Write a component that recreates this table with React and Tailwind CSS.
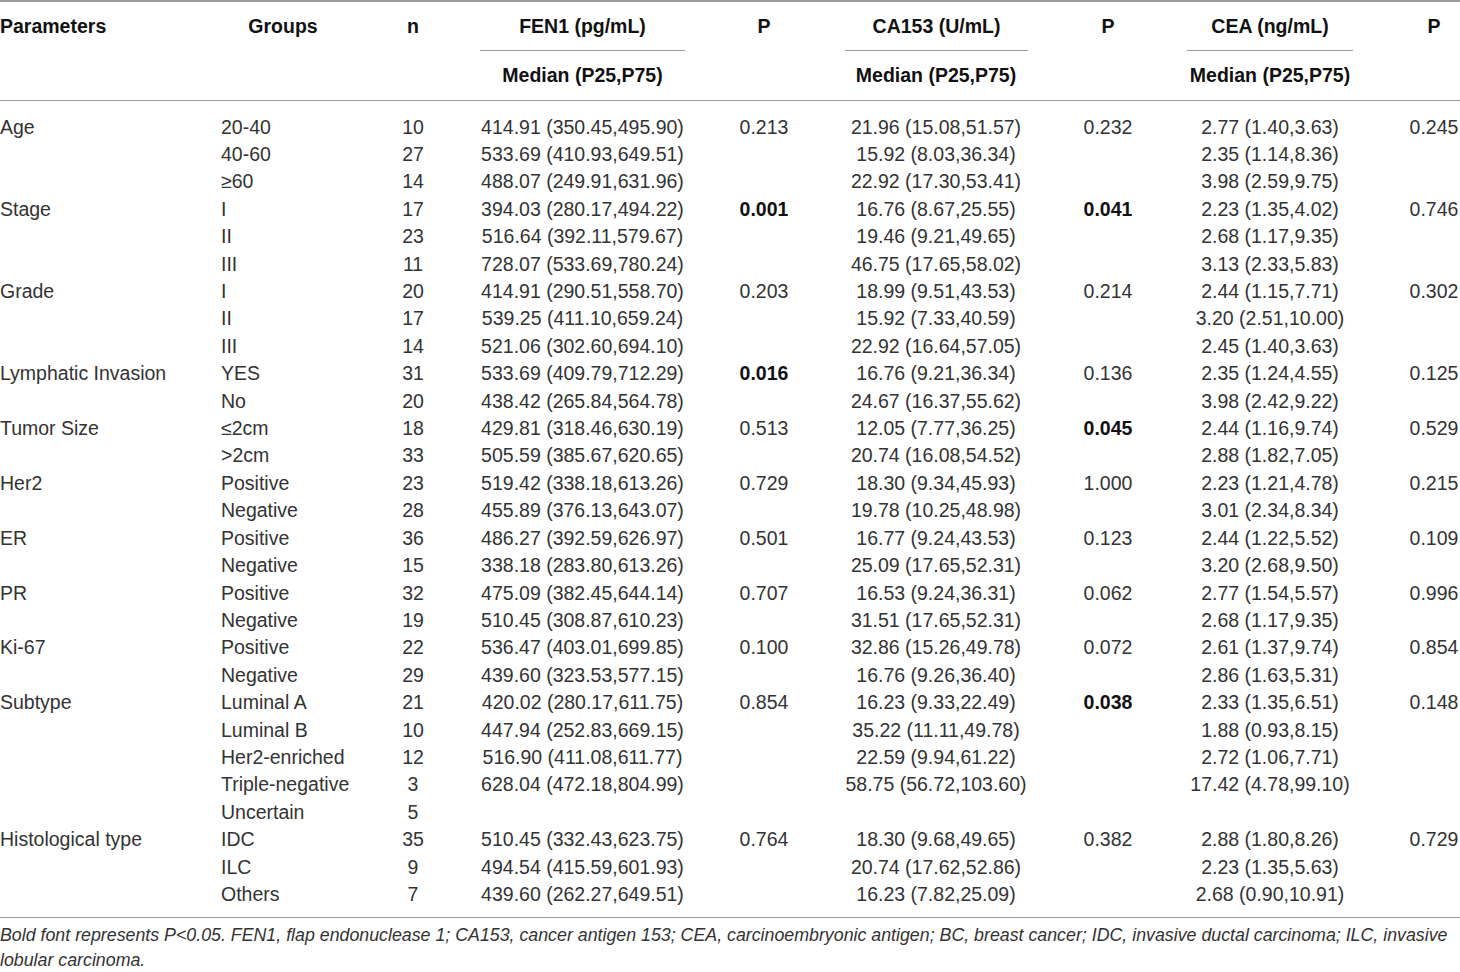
const rows = [
  ["Age", "20-40", "10", "414.91 (350.45,495.90)", "0.213", "21.96 (15.08,51.57)", "0.232", "2.77 (1.40,3.63)", "0.245"],
  ["", "40-60", "27", "533.69 (410.93,649.51)", "", "15.92 (8.03,36.34)", "", "2.35 (1.14,8.36)", ""],
  ["", "≥60", "14", "488.07 (249.91,631.96)", "", "22.92 (17.30,53.41)", "", "3.98 (2.59,9.75)", ""],
  ["Stage", "I", "17", "394.03 (280.17,494.22)", "*0.001", "16.76 (8.67,25.55)", "*0.041", "2.23 (1.35,4.02)", "0.746"],
  ["", "II", "23", "516.64 (392.11,579.67)", "", "19.46 (9.21,49.65)", "", "2.68 (1.17,9.35)", ""],
  ["", "III", "11", "728.07 (533.69,780.24)", "", "46.75 (17.65,58.02)", "", "3.13 (2.33,5.83)", ""],
  ["Grade", "I", "20", "414.91 (290.51,558.70)", "0.203", "18.99 (9.51,43.53)", "0.214", "2.44 (1.15,7.71)", "0.302"],
  ["", "II", "17", "539.25 (411.10,659.24)", "", "15.92 (7.33,40.59)", "", "3.20 (2.51,10.00)", ""],
  ["", "III", "14", "521.06 (302.60,694.10)", "", "22.92 (16.64,57.05)", "", "2.45 (1.40,3.63)", ""],
  ["Lymphatic Invasion", "YES", "31", "533.69 (409.79,712.29)", "*0.016", "16.76 (9.21,36.34)", "0.136", "2.35 (1.24,4.55)", "0.125"],
  ["", "No", "20", "438.42 (265.84,564.78)", "", "24.67 (16.37,55.62)", "", "3.98 (2.42,9.22)", ""],
  ["Tumor Size", "≤2cm", "18", "429.81 (318.46,630.19)", "0.513", "12.05 (7.77,36.25)", "*0.045", "2.44 (1.16,9.74)", "0.529"],
  ["", ">2cm", "33", "505.59 (385.67,620.65)", "", "20.74 (16.08,54.52)", "", "2.88 (1.82,7.05)", ""],
  ["Her2", "Positive", "23", "519.42 (338.18,613.26)", "0.729", "18.30 (9.34,45.93)", "1.000", "2.23 (1.21,4.78)", "0.215"],
  ["", "Negative", "28", "455.89 (376.13,643.07)", "", "19.78 (10.25,48.98)", "", "3.01 (2.34,8.34)", ""],
  ["ER", "Positive", "36", "486.27 (392.59,626.97)", "0.501", "16.77 (9.24,43.53)", "0.123", "2.44 (1.22,5.52)", "0.109"],
  ["", "Negative", "15", "338.18 (283.80,613.26)", "", "25.09 (17.65,52.31)", "", "3.20 (2.68,9.50)", ""],
  ["PR", "Positive", "32", "475.09 (382.45,644.14)", "0.707", "16.53 (9.24,36.31)", "0.062", "2.77 (1.54,5.57)", "0.996"],
  ["", "Negative", "19", "510.45 (308.87,610.23)", "", "31.51 (17.65,52.31)", "", "2.68 (1.17,9.35)", ""],
  ["Ki-67", "Positive", "22", "536.47 (403.01,699.85)", "0.100", "32.86 (15.26,49.78)", "0.072", "2.61 (1.37,9.74)", "0.854"],
  ["", "Negative", "29", "439.60 (323.53,577.15)", "", "16.76 (9.26,36.40)", "", "2.86 (1.63,5.31)", ""],
  ["Subtype", "Luminal A", "21", "420.02 (280.17,611.75)", "0.854", "16.23 (9.33,22.49)", "*0.038", "2.33 (1.35,6.51)", "0.148"],
  ["", "Luminal B", "10", "447.94 (252.83,669.15)", "", "35.22 (11.11,49.78)", "", "1.88 (0.93,8.15)", ""],
  ["", "Her2-enriched", "12", "516.90 (411.08,611.77)", "", "22.59 (9.94,61.22)", "", "2.72 (1.06,7.71)", ""],
  ["", "Triple-negative", "3", "628.04 (472.18,804.99)", "", "58.75 (56.72,103.60)", "", "17.42 (4.78,99.10)", ""],
  ["", "Uncertain", "5", "", "", "", "", "", ""],
  ["Histological type", "IDC", "35", "510.45 (332.43,623.75)", "0.764", "18.30 (9.68,49.65)", "0.382", "2.88 (1.80,8.26)", "0.729"],
  ["", "ILC", "9", "494.54 (415.59,601.93)", "", "20.74 (17.62,52.86)", "", "2.23 (1.35,5.63)", ""],
  ["", "Others", "7", "439.60 (262.27,649.51)", "", "16.23 (7.82,25.09)", "", "2.68 (0.90,10.91)", ""],
];

const grid = "grid grid-cols-[213px_140px_120px_219px_144px_200px_144px_180px_100px]";

function PVal({ v, last }) {
  const bold = v.startsWith("*");
  const text = bold ? v.slice(1) : v;
  return (
    <div className={`text-center ${last ? "pl-[48px]" : ""} ${bold ? "font-bold text-[#111]" : ""}`}>
      {text}
    </div>
  );
}

export default function App() {
  return (
    <div
      className="w-[1460px] h-[972px] bg-white text-[#333] text-[19.5px] overflow-hidden"
      style={{ fontFamily: '"Liberation Sans", Arial, sans-serif' }}
    >
      <div className="border-t-2 border-[#9a9a9a]">
        {/* header */}
        <div className={`${grid} h-[49px] items-center font-bold text-[#111]`}>
          <div>Parameters</div>
          <div className="text-center">Groups</div>
          <div className="text-center">n</div>
          <div className="h-full flex items-center justify-center mx-[7px] border-b border-[#9a9a9a] pt-[2px]">FEN1 (pg/mL)</div>
          <div className="text-center">P</div>
          <div className="h-full flex items-center justify-center ml-[9px] mr-[8px] border-b border-[#9a9a9a] pt-[2px]">CA153 (U/mL)</div>
          <div className="text-center">P</div>
          <div className="h-full flex items-center justify-center mx-[7px] border-b border-[#9a9a9a] pt-[2px]">CEA (ng/mL)</div>
          <div className="text-center pl-[48px]">P</div>
        </div>
        <div className={`${grid} h-[50px] items-center font-bold text-[#111] border-b border-[#9a9a9a]`}>
          <div />
          <div />
          <div />
          <div className="text-center">Median (P25,P75)</div>
          <div />
          <div className="text-center">Median (P25,P75)</div>
          <div />
          <div className="text-center">Median (P25,P75)</div>
          <div />
        </div>

        {/* body */}
        <div className="pt-[12.6px] pb-[9px] border-b border-[#9a9a9a]">
          {rows.map((r, i) => (
            <div key={i} className={`${grid} h-[27.42px] leading-[27.42px] whitespace-nowrap`}>
              <div>{r[0]}</div>
              <div className="pl-2">{r[1]}</div>
              <div className="text-center">{r[2]}</div>
              <div className="text-center">{r[3]}</div>
              <PVal v={r[4]} />
              <div className="text-center">{r[5]}</div>
              <PVal v={r[6]} />
              <div className="text-center">{r[7]}</div>
              <PVal v={r[8]} last />
            </div>
          ))}
        </div>

        <p className="pt-[5px] text-[17.8px] leading-[25px] italic text-[#333]">
          Bold font represents P&lt;0.05. FEN1, flap endonuclease 1; CA153, cancer antigen 153; CEA, carcinoembryonic antigen; BC, breast cancer; IDC, invasive ductal carcinoma; ILC, invasive lobular carcinoma.
        </p>
      </div>
    </div>
  );
}
